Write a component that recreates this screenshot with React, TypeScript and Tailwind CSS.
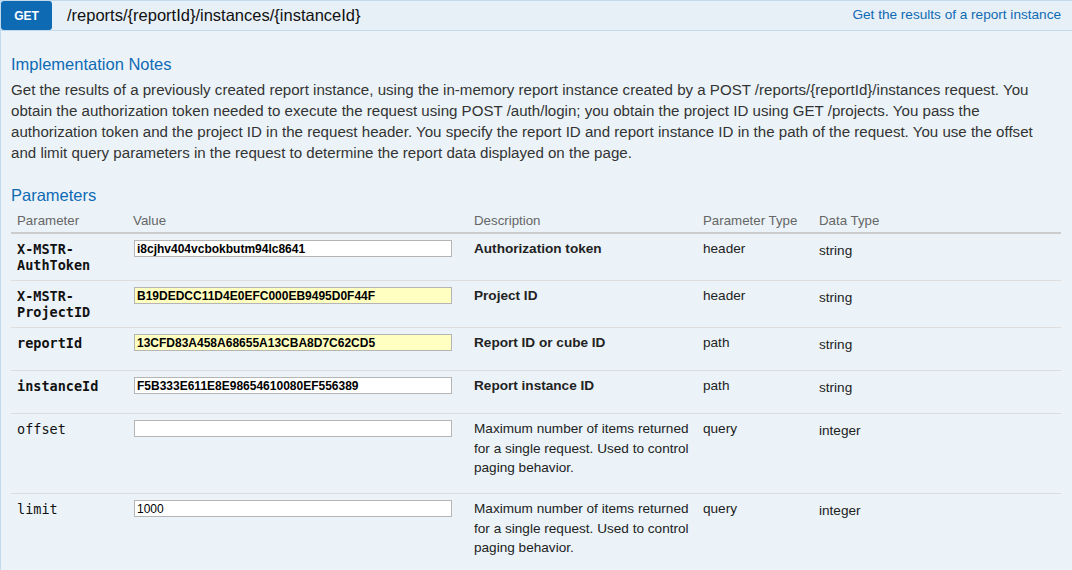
import React from "react";

type Param = {
  name: string;
  value: string;
  required: boolean;
  description: string;
  paramType: string;
  dataType: string;
  rowClass: string;
};

const params: Param[] = [
  {
    name: "X-MSTR-AuthToken",
    value: "i8cjhv404vcbokbutm94lc8641",
    required: true,
    description: "Authorization token",
    paramType: "header",
    dataType: "string",
    rowClass: "h-[47px]",
  },
  {
    name: "X-MSTR-ProjectID",
    value: "B19DEDCC11D4E0EFC000EB9495D0F44F",
    required: true,
    description: "Project ID",
    paramType: "header",
    dataType: "string",
    rowClass: "h-[47px]",
  },
  {
    name: "reportId",
    value: "13CFD83A458A68655A13CBA8D7C62CD5",
    required: true,
    description: "Report ID or cube ID",
    paramType: "path",
    dataType: "string",
    rowClass: "h-[43px]",
  },
  {
    name: "instanceId",
    value: "F5B333E611E8E98654610080EF556389",
    required: true,
    description: "Report instance ID",
    paramType: "path",
    dataType: "string",
    rowClass: "h-[43px]",
  },
  {
    name: "offset",
    value: "",
    required: false,
    description: "Maximum number of items returned for a single request. Used to control paging behavior.",
    paramType: "query",
    dataType: "integer",
    rowClass: "h-[80px]",
  },
  {
    name: "limit",
    value: "1000",
    required: false,
    description: "Maximum number of items returned for a single request. Used to control paging behavior.",
    paramType: "query",
    dataType: "integer",
    rowClass: "h-[80px]",
  },
];

const gridCols = "grid grid-cols-[117px_340px_229px_116px_1fr]";

const ParamRow = ({ p }: { p: Param }) => (
  <div className={`${gridCols} ${p.rowClass} border-b border-[#dddddd] items-start`}>
    <div
      className={`pl-[6px] pt-[7px] leading-[16px] text-[13.5px] text-[#111] font-['DejaVu_Sans_Mono',monospace] ${
        p.required ? "font-bold" : ""
      }`}
    >
      {p.name}
    </div>
    <div className="pl-[6px] pt-[6px]">
      <input
        readOnly
        value={p.value}
        className={`block w-[318px] h-[17px] px-[2px] border border-[#b5b5b5] text-[12px] text-black font-['Liberation_Sans',Arial,sans-serif] outline-none ${
          p.required ? "font-bold" : ""
        } ${p.required && (p.name === "X-MSTR-ProjectID" || p.name === "reportId") ? "bg-[#ffffc2]" : "bg-white"}`}
      />
    </div>
    <div
      className={`pl-[6px] pt-[5px] leading-[19.5px] text-[13.6px] text-[#222] ${
        p.required ? "font-bold" : ""
      }`}
    >
      {p.description}
    </div>
    <div className="pl-[6px] pt-[5px] leading-[19.5px] text-[13.6px] text-[#222]">{p.paramType}</div>
    <div className="pl-[6px] pt-[7px] leading-[19.5px] text-[13.6px] text-[#222]">{p.dataType}</div>
  </div>
);

export default function App() {
  return (
    <div className="w-[1072px] h-[570px] overflow-hidden bg-[#ebf3f9] border-l border-[#c3d9ec] font-['Liberation_Sans',Arial,sans-serif]">
      <div className="flex items-center h-[31px] bg-[#e7f0f7] border-t border-b border-[#c3d9ec]">
        <div className="w-[51px] h-[29px] bg-[#0f6ab4] rounded-[3px] text-white font-bold text-[12px] flex items-center justify-center">
          GET
        </div>
        <div className="ml-[15px] text-[16.5px] text-[#111]">/reports/{"{reportId}"}/instances/{"{instanceId}"}</div>
        <a className="ml-auto mr-[11px] text-[13.6px] text-[#0f6ab4]">Get the results of a report instance</a>
      </div>

      <div className="pl-[10px] pr-[11px]">
        <h4 className="mt-[22px] text-[16.5px] leading-[22px] text-[#0f6ab4]">Implementation Notes</h4>
        <p className="mt-[4px] text-[15.1px] leading-[21px] text-[#333] whitespace-nowrap">
          Get the results of a previously created report instance, using the in-memory report instance created by a POST /reports/{"{reportId}"}/instances request. You
          <br />
          obtain the authorization token needed to execute the request using POST /auth/login; you obtain the project ID using GET /projects. You pass the
          <br />
          authorization token and the project ID in the request header. You specify the report ID and report instance ID in the path of the request. You use the offset
          <br />
          and limit query parameters in the request to determine the report data displayed on the page.
        </p>

        <h4 className="mt-[21px] text-[16.5px] leading-[22px] text-[#0f6ab4]">Parameters</h4>
        <div className={`${gridCols} mt-[6px] pb-[2px] border-b-2 border-[#cccccc] text-[13.3px] leading-[18px] text-[#666]`}>
          <div className="pl-[6px]">Parameter</div>
          <div className="pl-[5px]">Value</div>
          <div className="pl-[6px]">Description</div>
          <div className="pl-[6px]">Parameter Type</div>
          <div className="pl-[6px]">Data Type</div>
        </div>
        {params.map((p) => (
          <ParamRow key={p.name} p={p} />
        ))}
      </div>
    </div>
  );
}
